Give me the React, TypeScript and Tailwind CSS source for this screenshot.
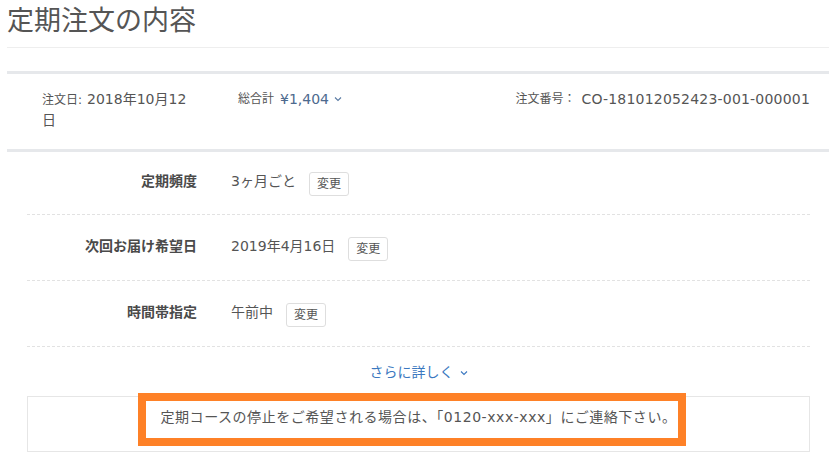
import React from "react";

const Chevron = ({ className = "" }: { className?: string }) => (
  <svg width="8" height="6" viewBox="0 0 8 6" className={className} fill="none">
    <polyline points="1,1.5 4,4.5 7,1.5" stroke="currentColor" strokeWidth="1.1" />
  </svg>
);

const ChangeButton = () => (
  <button className="ml-[13px] mt-[6px] h-[24px] px-[7px] border border-[#dedede] rounded-[3px] bg-white text-[12px] leading-[22px] text-[#555]">
    変更
  </button>
);

const Row = ({ label, value, h }: { label: string; value: string; h: string }) => (
  <div className={`flex items-center pb-[4px] border-b border-dashed border-[#e2e2e2] ${h}`}>
    <div className="w-[170px] text-right font-bold text-[14px] leading-[20px] text-[#4a4a4a]">{label}</div>
    <div className="flex items-center pl-[34px]">
      <span className="text-[14px] leading-[20px] text-[#555]">{value}</span>
      <ChangeButton />
    </div>
  </div>
);

export default function App() {
  return (
    <div className="w-[838px] h-[473px] bg-white pl-[7px] pr-[9px] font-['DejaVu_Sans','Noto_Sans_CJK_JP',sans-serif] text-[#555]">
      <h1 className="pt-[3px] pb-[8px] text-[27px] leading-[36px] font-normal text-[#555] border-b border-[#eeeeee]">
        定期注文の内容
      </h1>

      <div className="mt-[23px] h-[81px] border-y-[3px] border-[#e6e8eb] flex items-start pt-[15px] pl-[35px] pr-[19px]">
        <div className="w-[152px] leading-[20px]">
          <div className="flex items-baseline">
            <span className="text-[12px]">注文日:</span>
            <span className="text-[14px] ml-[5px]">2018年10月12</span>
          </div>
          <div className="text-[14px]">日</div>
        </div>
        <div className="ml-[44px] leading-[20px] flex items-center">
          <span className="text-[12px]">総合計</span>
          <span className="text-[14px] ml-[6px] text-[#4d6a8e]">¥1,404</span>
          <Chevron className="ml-[5px] text-[#5a7ba3]" />
        </div>
        <div className="ml-auto leading-[20px] flex items-center">
          <span className="text-[12px]">注文番号：</span>
          <span className="text-[14px] ml-[6px] tracking-[0.2px]">CO-181012052423-001-000001</span>
        </div>
      </div>

      <div className="pl-[20px] pr-[19px]">
        <Row label="定期頻度" value="3ヶ月ごと" h="h-[63px]" />
        <Row label="次回お届け希望日" value="2019年4月16日" h="h-[66px]" />
        <Row label="時間帯指定" value="午前中" h="h-[66px]" />

        <div className="mt-[15px] mb-[14px] flex items-center justify-center leading-[20px] text-[14px] text-[#3b78c0]">
          <span>さらに詳しく</span>
          <Chevron className="ml-[6px] mt-[2px]" />
        </div>

        <div className="relative h-[56px] border border-[#e6e6e6] pt-[10px] text-center text-[14px] leading-[20px] tracking-[0.55px] text-[#555]">
          定期コースの停止をご希望される場合は、「0120-xxx-xxx」にご連絡下さい。
          <div className="absolute left-[110px] top-[-4px] w-[548px] h-[53px] border-[8px] border-[#fe8127]" />
        </div>
      </div>
    </div>
  );
}
